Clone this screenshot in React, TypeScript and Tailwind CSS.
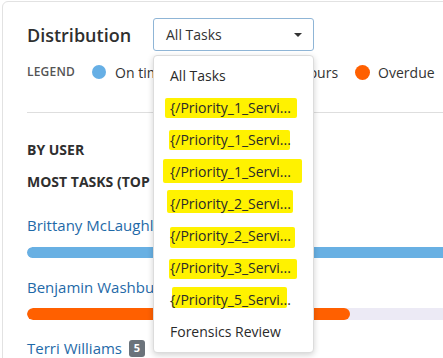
import React from "react";

const items: { label: string; hl?: { l: number; t: number; w: number; h: number } }[] = [
  { label: "All Tasks" },
  { label: "{/Priority_1_Servi...", hl: { l: -5, t: 6, w: 132, h: 20 } },
  { label: "{/Priority_1_Servi...", hl: { l: -1, t: 6, w: 121, h: 20 } },
  { label: "{/Priority_1_Servi...", hl: { l: -7, t: 3, w: 139, h: 24 } },
  { label: "{/Priority_2_Servi...", hl: { l: -3, t: 2, w: 126, h: 23 } },
  { label: "{/Priority_2_Servi...", hl: { l: 0, t: 7, w: 125, h: 21 } },
  { label: "{/Priority_3_Servi...", hl: { l: -1, t: 7, w: 128, h: 20 } },
  { label: "{/Priority_5_Servi...", hl: { l: 2, t: 3, w: 115, h: 21 } },
  { label: "Forensics Review" },
];

export default function App() {
  return (
    <div className="w-[443px] h-[358px] overflow-hidden bg-white relative font-['Open_Sans',sans-serif] text-[#333]">
      <div className="ml-[2px] mt-[1px] w-[520px] h-[420px] border border-[#e2e2e2] rounded-[6px] pl-[24px] pt-[16px]">
        {/* header */}
        <div className="flex items-center h-[33px]">
          <h2 className="text-[18px] font-semibold leading-[26px] w-[126px] text-[#2f2f2f]">Distribution</h2>
          <div className="relative">
            <div className="w-[161px] h-[33px] border border-[#8fb5d6] rounded-[3px] flex items-center justify-between pl-[12px] pr-[11px]">
              <span className="text-[14px] leading-[20px]">All Tasks</span>
              <svg width="8" height="4" viewBox="0 0 8 4" className="block">
                <path d="M0 0 L8 0 L4 4 Z" fill="#333" />
              </svg>
            </div>
            <div className="absolute left-0 top-[37px] w-[161px] h-[298px] bg-white border border-[#dcdcdc] rounded-[4px] shadow-[0_2px_6px_rgba(0,0,0,0.18)] py-[4px] z-10">
              {items.map((it, i) => (
                <div key={i} className="relative h-[32px] flex items-center pl-[16px]">
                  {it.hl && (
                    <span
                      className="absolute bg-[#fff200] rounded-[2px]"
                      style={{ left: 16 + it.hl.l, top: it.hl.t, width: it.hl.w, height: it.hl.h }}
                    />
                  )}
                  <span className="relative text-[14px] leading-[20px] text-[#2a2a2a] whitespace-nowrap">{it.label}</span>
                </div>
              ))}
            </div>
          </div>
        </div>

        {/* legend */}
        <div className="mt-[11px] flex items-center h-[20px] whitespace-nowrap">
          <span className="text-[12px] font-semibold text-[#555] tracking-[0.2px]">LEGEND</span>
          <div className="ml-[17px] flex items-center gap-[9px]">
            <span className="w-[14px] h-[14px] rounded-full bg-[#66afe5]" />
            <span className="text-[14px]">On time</span>
          </div>
          <div className="ml-[16px] flex items-center gap-[9px]">
            <span className="w-[14px] h-[14px] rounded-full bg-[#f5c400]" />
            <span className="text-[14px]">Due within 24 hours</span>
          </div>
          <div className="ml-[17px] flex items-center gap-[8px]">
            <span className="w-[15px] h-[15px] rounded-full bg-[#ff6000]" />
            <span className="text-[14px]">Overdue</span>
          </div>
        </div>

        <div className="mt-[30px] border-t border-[#dedede] w-[480px]" />

        <div className="mt-[27px] text-[14px] leading-[20px] font-bold text-[#2f2f2f]">BY USER</div>
        <div className="mt-[12px] text-[14px] leading-[20px] font-bold text-[#2f2f2f] whitespace-nowrap">MOST TASKS (TOP 5)</div>

        <div className="mt-[22px] text-[15px] leading-[22px] text-[#1f6aa8]">Brittany McLaughlin</div>
        <div className="mt-[11px] h-[11px] w-[470px] rounded-full bg-[#eceaf5] overflow-hidden">
          <div className="h-full w-full rounded-full bg-[#68b0e3]" />
        </div>

        <div className="mt-[18px] text-[15px] leading-[22px] text-[#1f6aa8]">Benjamin Washburn</div>
        <div className="mt-[10px] h-[12px] w-[470px] rounded-full bg-[#eceaf5] overflow-hidden">
          <div className="h-full w-[323px] rounded-full bg-[#ff6000]" />
        </div>

        <div className="mt-[17px] flex items-center h-[22px]">
          <span className="text-[15px] leading-[22px] text-[#1f6aa8]">Terri Williams</span>
          <span className="ml-[7px] w-[16px] h-[17px] rounded-[3px] bg-[#6b737b] text-white text-[11px] font-bold flex items-center justify-center">5</span>
        </div>
      </div>
    </div>
  );
}
